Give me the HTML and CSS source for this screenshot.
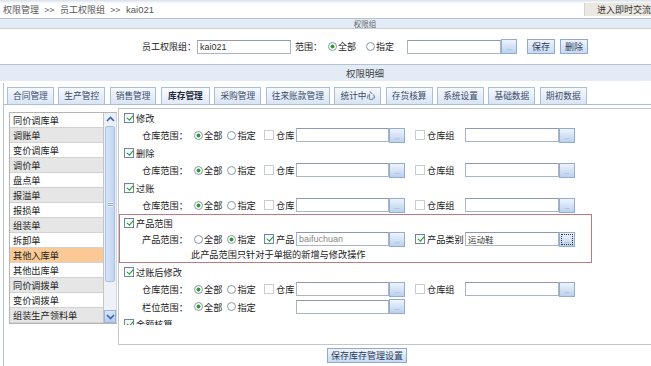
FILE: index.html
```html
<!DOCTYPE html>
<html lang="zh-CN">
<head>
<meta charset="utf-8">
<title>权限管理</title>
<link rel="stylesheet" href="styles.css">
</head>
<body>
<div class="page">
  <div class="top">
    <div class="crumb">权限管理 &gt;&gt; 员工权限组 &gt;&gt; <span class="lat">kai021</span></div>
    <div class="chat">进入即时交流</div>
  </div>
  <div class="bar bar-sm">权限组</div>
  <div class="form">
    <span class="flabel">员工权限组：</span>
    <span class="inp in-name">kai021</span>
    <span class="flabel fscope">范围：</span>
    <span class="radio on"></span><span class="rt">全部</span>
    <span class="radio r2"></span><span class="rt">指定</span>
    <span class="inp in-scope"></span><span class="dots">...</span>
    <span class="btn b-save">保存</span>
    <span class="btn b-del">删除</span>
  </div>
  <div class="bar bar-md">权限明细</div>
  <div class="panel">
    <div class="tabs">
      <span class="tab">合同管理</span>
      <span class="tab">生产管控</span>
      <span class="tab">销售管理</span>
      <span class="tab on">库存管理</span>
      <span class="tab">采购管理</span>
      <span class="tab">往来账款管理</span>
      <span class="tab">统计中心</span>
      <span class="tab">存货核算</span>
      <span class="tab">系统设置</span>
      <span class="tab">基础数据</span>
      <span class="tab">期初数据</span>
    </div>
    <div class="main">
      <div class="list">
        <ul class="items">
          <li>同价调库单</li>
          <li class="alt">调账单</li>
          <li>变价调库单</li>
          <li class="alt">调价单</li>
          <li>盘点单</li>
          <li class="alt">报溢单</li>
          <li>报损单</li>
          <li class="alt">组装单</li>
          <li>拆卸单</li>
          <li class="sel">其他入库单</li>
          <li>其他出库单</li>
          <li class="alt">同价调拨单</li>
          <li>变价调拨单</li>
          <li class="alt">组装生产领料单</li>
        </ul>
        <div class="sb">
          <span class="sb-btn"><svg width="9" height="6" viewBox="0 0 9 6"><path d="M1 5 L4.5 1.5 L8 5" fill="none" stroke="#3a64b0" stroke-width="1.6"/></svg></span>
          <span class="sb-thumb"><span class="grip"></span></span>
          <span class="sb-track"></span>
          <span class="sb-btn dn"><svg width="9" height="6" viewBox="0 0 9 6"><path d="M1 1 L4.5 4.5 L8 1" fill="none" stroke="#3a64b0" stroke-width="1.6"/></svg></span>
        </div>
      </div>
      <div class="content">
        <div class="clip">
          <div class="crow"><span class="chk on"></span><span class="ct">修改</span></div>
          <div class="srow">
            <span class="lab">仓库范围：</span>
            <span class="rg"><span class="radio on"></span><span class="rt">全部</span><span class="radio r2"></span><span class="rt">指定</span></span>
            <span class="ck"><span class="chk"></span><span class="ct">仓库</span></span>
            <span class="inp in-a"></span><span class="dots">...</span>
            <span class="ck ck2"><span class="chk"></span><span class="ct">仓库组</span></span>
            <span class="inp in-b"></span><span class="dots">...</span>
          </div>
          <div class="crow"><span class="chk on"></span><span class="ct">删除</span></div>
          <div class="srow">
            <span class="lab">仓库范围：</span>
            <span class="rg"><span class="radio on"></span><span class="rt">全部</span><span class="radio r2"></span><span class="rt">指定</span></span>
            <span class="ck"><span class="chk"></span><span class="ct">仓库</span></span>
            <span class="inp in-a"></span><span class="dots">...</span>
            <span class="ck ck2"><span class="chk"></span><span class="ct">仓库组</span></span>
            <span class="inp in-b"></span><span class="dots">...</span>
          </div>
          <div class="crow"><span class="chk on"></span><span class="ct">过账</span></div>
          <div class="srow">
            <span class="lab">仓库范围：</span>
            <span class="rg"><span class="radio on"></span><span class="rt">全部</span><span class="radio r2"></span><span class="rt">指定</span></span>
            <span class="ck"><span class="chk"></span><span class="ct">仓库</span></span>
            <span class="inp in-a"></span><span class="dots">...</span>
            <span class="ck ck2"><span class="chk"></span><span class="ct">仓库组</span></span>
            <span class="inp in-b"></span><span class="dots">...</span>
          </div>
          <div class="redbox">
            <div class="crow rb-row"><span class="chk on"></span><span class="ct">产品范围</span></div>
            <div class="srow rb-srow">
              <span class="lab">产品范围：</span>
              <span class="rg"><span class="radio"></span><span class="rt">全部</span><span class="radio r2 on"></span><span class="rt">指定</span></span>
              <span class="ck"><span class="chk on"></span><span class="ct">产品</span></span>
              <span class="inp in-a val">baifuchuan</span><span class="dots">...</span>
              <span class="ck ck2"><span class="chk on"></span><span class="ct">产品类别</span></span>
              <span class="inp in-b val2">运动鞋</span><span class="dots focus">...</span>
            </div>
            <div class="note">此产品范围只针对于单据的新增与修改操作</div>
          </div>
          <div class="crow"><span class="chk on"></span><span class="ct">过账后修改</span></div>
          <div class="srow">
            <span class="lab">仓库范围：</span>
            <span class="rg"><span class="radio on"></span><span class="rt">全部</span><span class="radio r2"></span><span class="rt">指定</span></span>
            <span class="ck"><span class="chk"></span><span class="ct">仓库</span></span>
            <span class="inp in-a"></span><span class="dots">...</span>
            <span class="ck ck2"><span class="chk"></span><span class="ct">仓库组</span></span>
            <span class="inp in-b"></span><span class="dots">...</span>
          </div>
          <div class="srow">
            <span class="lab">栏位范围：</span>
            <span class="rg"><span class="radio on"></span><span class="rt">全部</span><span class="radio r2"></span><span class="rt">指定</span></span>
            <span class="ck"></span>
            <span class="inp in-a"></span><span class="dots">...</span>
          </div>
          <div class="crow"><span class="chk on"></span><span class="ct">金额核算</span></div>
        </div>
      </div>
    </div>
    <div class="foot"><span class="btn b-big">保存库存管理设置</span></div>
  </div>
</div>
</body>
</html>
```

FILE: styles.css
```css
html, body {
  margin: 0;
  padding: 0;
  overflow: hidden;
  background: #fff;
}
body {
  font-family: "Noto Sans CJK SC", "Noto Sans", sans-serif;
  font-size: 9.2px;
  color: #222;
}
.page {
  width: 730px;
}

/* top breadcrumb */
.top {
  height: 18px;
  display: flex;
  justify-content: space-between;
  align-items: flex-start;
  background: linear-gradient(#d9e0ea 0, #eef2f7 2px, #fff 4px);
}
.crumb {
  padding: 3px 0 0 3px;
  line-height: 14px;
  color: #555;
  font-size: 9px;
  word-spacing: 3.5px;
}
.lat {
  font-family: "Liberation Sans", sans-serif;
  font-size: 9.5px;
  word-spacing: 0;
}
.chat {
  margin-top: 3px;
  width: 63px;
  height: 13px;
  line-height: 13px;
  padding-left: 12px;
  background: #ebe8e1;
  border-left: 1px solid #d6d2ca;
  color: #333;
  font-size: 9px;
  margin-right: 70px;
}

/* header bars */
.bar {
  border-top: 1px solid #b7c2cf;
  background: #e3ebf6;
  text-align: center;
  color: #444;
}
.bar-sm {
  height: 9px;
  line-height: 9px;
  font-size: 7.5px;
  color: #666;
  border-bottom: 1px solid #c6cfda;
}
.bar-md {
  height: 16px;
  line-height: 16px;
  font-size: 9.5px;
  margin-top: 0;
}

/* form */
.form {
  height: 35px;
  display: flex;
  align-items: center;
  justify-content: center;
  font-size: 9px;
}
.flabel { color: #222; }
.fscope { margin-left: 4px; }
.form .radio { margin-left: 6px; }
.form .r2 { margin-left: 10px; }
.in-name {
  width: 94px;
  margin-left: 1px;
}
.in-scope {
  width: 94px;
  margin-left: 13px;
}
.b-save { margin-left: 10px; }
.b-del { margin-left: 5px; }

.inp {
  box-sizing: border-box;
  height: 14px;
  border: 1px solid #a9b5c5;
  border-top-color: #8e9aab;
  background: #fff;
  font-family: "Liberation Sans", "Noto Sans CJK SC", sans-serif;
  font-size: 9px;
  line-height: 12px;
  padding-left: 2px;
  color: #333;
}
.dots {
  box-sizing: border-box;
  width: 16px;
  height: 15px;
  border: 1px solid #93add2;
  background: linear-gradient(#eef4fc, #bcd1ee);
  font-size: 6px;
  line-height: 16px;
  color: #5a7ab0;
  text-align: center;
  font-family: "Liberation Sans", sans-serif;
}
.dots.focus {
  outline: 1px dotted #333;
  outline-offset: -3px;
}
.btn {
  box-sizing: border-box;
  height: 15px;
  line-height: 13px;
  padding: 0 4px;
  border: 1px solid #8fa9cf;
  background: linear-gradient(#eef4fc, #c8daf2);
  color: #2c3d5c;
  font-size: 9px;
}

/* radio / checkbox */
.radio {
  box-sizing: border-box;
  width: 9px;
  height: 9px;
  border-radius: 50%;
  border: 1px solid #8797aa;
  background: #fff;
  flex: none;
}
.radio.on {
  background: radial-gradient(circle, #2f9a2f 0 1.7px, #fff 2.3px);
}
.rt { margin-left: 1px; }
.chk {
  box-sizing: border-box;
  position: relative;
  width: 10px;
  height: 10px;
  border: 1px solid #c8cdd3;
  background: #fff;
  flex: none;
}
.chk.on {
  border-color: #6f86a3;
  background: linear-gradient(#f2f4f6, #fff);
}
.chk.on::after {
  content: "";
  position: absolute;
  left: 2.5px;
  top: 0px;
  width: 2.5px;
  height: 5px;
  border: solid #1f9a2a;
  border-width: 0 1.6px 1.6px 0;
  transform: rotate(40deg);
}
.ct { margin-left: 2px; }

/* panel and tabs */
.panel {
  margin-left: 3px;
  margin-top: 2px;
  border-left: 1px solid #b8c3cf;
}
.tabs {
  display: flex;
  gap: 4.6px;
  padding: 4px 0 0 3px;
  height: 17px;
  border-bottom: 1px solid #a9bedb;
}
.tab {
  height: 16px;
  line-height: 16px;
  padding: 0 5px;
  border: 1px solid #a9bedb;
  border-bottom: none;
  background: linear-gradient(#f6f9fd, #d9e4f4);
  color: #3b4c6b;
  font-size: 8.7px;
}
.tab.on {
  font-weight: bold;
  color: #1e2a40;
  padding: 0 6px;
  background: linear-gradient(#fafcff, #e2eaf7);
}

/* main area */
.main {
  display: flex;
  align-items: flex-start;
  padding-top: 3px;
}
.list {
  display: flex;
  margin: 4px 0 0 5px;
  border: 1px solid #b5b5b5;
  border-right: 0;
}
.items {
  list-style: none;
  margin: 0;
  padding: 0;
  width: 93px;
  border-right: 1px solid #c4c4c4;
}
.items li {
  height: 14px;
  line-height: 14px;
  border-bottom: 1px solid #d2d2d2;
  padding-left: 3px;
  white-space: nowrap;
  background: #fff;
}
.items li.alt { background: #e6e6e6; }
.items li.sel { background: #fbc995; }
.sb {
  width: 12px;
  display: flex;
  flex-direction: column;
  background: #eef2f8;
  border-right: 1px solid #d0d8e4;
}
.sb-btn {
  height: 12px;
  display: flex;
  align-items: center;
  justify-content: center;
  background: #e9f0fa;
}
.sb-btn.dn {
  height: 13px;
  background: linear-gradient(#d6e4f8, #b8cdec);
  border: 1px solid #9db5da;
  box-sizing: border-box;
}
.sb-thumb {
  margin: 1px 1px 0;
  height: 154px;
  border: 1px solid #a9c0e2;
  border-radius: 2px;
  background: linear-gradient(90deg, #d5e3f7, #c2d6f1);
  display: flex;
  align-items: center;
  justify-content: center;
}
.grip {
  width: 5px;
  height: 5px;
  background: repeating-linear-gradient(#eef4fc 0 1px, #8ca6cc 1px 2px);
}
.sb-track { flex: 1; }

.content {
  flex: 1;
  margin-left: 1px;
  height: 235px;
  border: 1px solid #c6c6c6;
}
.clip {
  height: 216px;
  overflow: hidden;
}
.crow {
  height: 17.5px;
  display: flex;
  align-items: center;
  padding-left: 5px;
}
.srow {
  height: 17.5px;
  display: flex;
  align-items: center;
  padding-left: 23px;
}
.lab { width: 52px; flex: none; }
.rg {
  width: 70px;
  flex: none;
  display: flex;
  align-items: center;
}
.rg .r2 { margin-left: 5px; }
.ck {
  width: 32px;
  flex: none;
  display: flex;
  align-items: center;
}
.ck2 {
  width: 50px;
  margin-left: 10px;
}
.in-a { width: 93px; }
.in-b { width: 94px; }
.val { color: #8a8a8a; }
.val2 { color: #333; font-family: "Noto Sans CJK SC", sans-serif; font-size: 8.5px; }

.redbox {
  width: 473px;
  border: 1px solid #ba7c7c;
  box-sizing: border-box;
}
.rb-row { height: 16px; padding-left: 4px; }
.rb-srow { height: 16px; padding-left: 22px; }
.note {
  height: 15px;
  line-height: 15px;
  padding-left: 71px;
}

.foot {
  height: 21px;
  display: flex;
  justify-content: center;
  padding-top: 3px;
  box-sizing: border-box;
}
.b-big {
  padding: 0 3px;
}
```
